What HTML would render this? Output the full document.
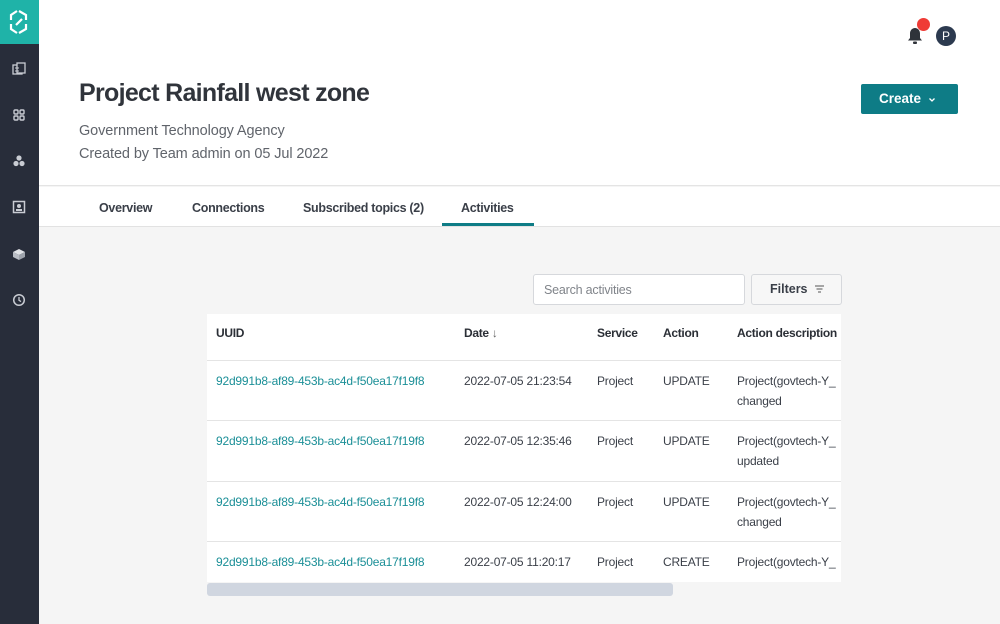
<!DOCTYPE html>
<html><head><meta charset="utf-8"><style>
*{margin:0;padding:0;box-sizing:border-box}
body{width:1000px;height:624px;overflow:hidden;background:#f5f5f5;font-family:"Liberation Sans",sans-serif;color:#2b2f36;position:relative}
.a{position:absolute;white-space:nowrap}
#side{position:absolute;left:0;top:0;width:39px;height:624px;background:#282d3a}
#logo{position:absolute;left:0;top:0;width:39px;height:44px;background:#1fb3a8}
#hdr{position:absolute;left:39px;top:0;width:961px;height:186px;background:#fff;border-bottom:1px solid #e4e4e4}
#tabs{position:absolute;left:39px;top:187px;width:961px;height:40px;background:#fff;border-bottom:1px solid #e2e2e2}
.tab{position:absolute;top:14px;font-size:12.5px;font-weight:bold;color:#3a3f48;letter-spacing:-0.3px}
.t{font-size:12px;letter-spacing:-0.2px;color:#3a3f48;line-height:20px}
.th{font-size:12px;font-weight:bold;letter-spacing:-0.3px;color:#2b2f36}
.l{color:#1b8f97}
.hr{position:absolute;left:207px;width:634px;height:1px;background:#e4e4e4}
</style></head><body>
<div id="side">
<div id="logo"><svg width="39" height="44" viewBox="0 0 39 44"><g fill="none" stroke="#fff" stroke-width="2.2"><path d="M19 11 L26 15 L26 20"/><path d="M26 24 L26 29 L19 33"/><path d="M17 33 L11 29 L11 24"/><path d="M11 20 L11 15 L17 11"/><path d="M16 25 L22 19"/></g></svg></div>
<svg class="a" style="left:12px;top:62px" width="14" height="14" viewBox="0 0 14 14"><rect x="1" y="3" width="9" height="9" fill="none" stroke="#c9ccd3" stroke-width="1.3"/><rect x="5" y="1" width="8" height="10" fill="#282d3a" stroke="#c9ccd3" stroke-width="1.3"/><path d="M3 6h4M3 9h4" stroke="#c9ccd3"/></svg>
<svg class="a" style="left:12px;top:108px" width="14" height="14" viewBox="0 0 14 14"><g fill="none" stroke="#c9ccd3" stroke-width="1.4"><rect x="2" y="2" width="4" height="4" rx="1"/><rect x="8" y="2" width="4" height="4" rx="1"/><rect x="2" y="8" width="4" height="4" rx="1"/><rect x="8" y="8" width="4" height="4" rx="1"/></g></svg>
<svg class="a" style="left:12px;top:154px" width="14" height="14" viewBox="0 0 14 14"><g fill="#c9ccd3"><circle cx="7" cy="4" r="2.6"/><circle cx="4" cy="9.5" r="2.6"/><circle cx="10" cy="9.5" r="2.6"/></g></svg>
<svg class="a" style="left:12px;top:200px" width="14" height="14" viewBox="0 0 14 14"><rect x="1.5" y="1.5" width="11" height="11" fill="none" stroke="#c9ccd3" stroke-width="1.5"/><circle cx="7" cy="6" r="2" fill="#c9ccd3"/><rect x="4" y="9" width="6" height="2" fill="#c9ccd3"/></svg>
<svg class="a" style="left:12px;top:247px" width="14" height="14" viewBox="0 0 14 14"><path d="M7 2 L13 5 L7 8 L1 5Z" fill="#e0e2e6"/><path d="M1 5 L7 8 L7 13 L1 10Z" fill="#b8bcc4"/><path d="M13 5 L7 8 L7 13 L13 10Z" fill="#9da2ab"/></svg>
<svg class="a" style="left:12px;top:293px" width="14" height="14" viewBox="0 0 14 14"><circle cx="7" cy="7" r="5.3" fill="none" stroke="#c9ccd3" stroke-width="1.5"/><path d="M7 4v3.3l2 1.3" fill="none" stroke="#c9ccd3" stroke-width="1.3"/></svg>
</div>
<div id="hdr">
<svg class="a" style="left:866px;top:26px" width="20" height="20" viewBox="0 0 20 20"><path d="M10 2c-3 0-5 2.5-5 5.5v4.5l-2 2.5h14l-2-2.5v-4.5c0-3-2-5.5-5-5.5z" fill="#2f333a"/><rect x="8" y="15.5" width="4" height="2.5" rx="1" fill="#2f333a"/></svg>
<div class="a" style="left:878px;top:18px;width:13px;height:13px;border-radius:50%;background:#ef3b36"></div>
<div class="a" style="left:897px;top:26px;width:20px;height:20px;border-radius:50%;background:#2c3a4f;color:#fff;font-size:12px;text-align:center;line-height:20px">P</div>
<div class="a" style="left:40px;top:79px;font-size:25px;font-weight:bold;color:#30343b;letter-spacing:-0.7px">Project Rainfall west zone</div>
<div class="a" style="left:40px;top:123px;font-size:14.5px;color:#60646b;letter-spacing:-0.1px">Government Technology Agency</div>
<div class="a" style="left:40px;top:146px;font-size:14.5px;color:#60646b;letter-spacing:-0.1px">Created by Team admin on 05 Jul 2022</div>
<div class="a" style="left:822px;top:84px;width:97px;height:30px;background:#0e7c86;border-radius:2px;color:#fff;font-size:13.5px;font-weight:bold;line-height:30px;padding-left:18px">Create <svg width="8" height="6" viewBox="0 0 8 6" style="margin-left:3px"><path d="M1.5 1.5L4 4l2.5-2.5" fill="none" stroke="#fff" stroke-width="1.3"/></svg></div>
</div>
<div id="tabs">
<div class="tab" style="left:60px">Overview</div>
<div class="tab" style="left:153px">Connections</div>
<div class="tab" style="left:264px">Subscribed topics (2)</div>
<div class="tab" style="left:422px">Activities</div>
<div class="a" style="left:403px;top:36px;width:92px;height:3px;background:#0e7c86"></div>
</div>
<div class="a" style="left:533px;top:274px;width:212px;height:31px;background:#fff;border:1px solid #d6d8dc;border-radius:3px;font-size:12.5px;color:#80848a;padding:8px 10px;letter-spacing:-0.2px">Search activities</div>
<div class="a" style="left:751px;top:274px;width:91px;height:31px;background:#f7f7f7;border:1px solid #d6d8dc;border-radius:3px;font-size:12.5px;font-weight:bold;color:#3a3f48;padding:7px 0 0 18px">Filters <svg width="11" height="9" viewBox="0 0 11 9" style="margin-left:3px"><path d="M1 2h9M2.5 5h6M4 8h3" stroke="#555" stroke-width="1.1"/></svg></div>
<div class="a" style="left:207px;top:314px;width:634px;height:268px;background:#fff"></div>
<div class="hr" style="top:360px"></div><div class="hr" style="top:420px"></div><div class="hr" style="top:481px"></div><div class="hr" style="top:541px"></div>
<div class="a th" style="left:216px;top:326px">UUID</div>
<div class="a th" style="left:464px;top:326px">Date <span style="font-weight:normal;color:#666">&#8595;</span></div>
<div class="a th" style="left:597px;top:326px">Service</div>
<div class="a th" style="left:663px;top:326px">Action</div>
<div class="a th" style="left:737px;top:326px;width:104px;overflow:hidden">Action description</div>
<div class="a t l" style="left:216px;top:371px">92d991b8-af89-453b-ac4d-f50ea17f19f8</div>
<div class="a t" style="left:464px;top:371px">2022-07-05 21:23:54</div>
<div class="a t" style="left:597px;top:371px">Project</div>
<div class="a t" style="left:663px;top:371px">UPDATE</div>
<div class="a t" style="left:737px;top:371px;width:104px;overflow:hidden">Project(govtech-Y_<br>changed</div>
<div class="a t l" style="left:216px;top:431px">92d991b8-af89-453b-ac4d-f50ea17f19f8</div>
<div class="a t" style="left:464px;top:431px">2022-07-05 12:35:46</div>
<div class="a t" style="left:597px;top:431px">Project</div>
<div class="a t" style="left:663px;top:431px">UPDATE</div>
<div class="a t" style="left:737px;top:431px;width:104px;overflow:hidden">Project(govtech-Y_<br>updated</div>
<div class="a t l" style="left:216px;top:492px">92d991b8-af89-453b-ac4d-f50ea17f19f8</div>
<div class="a t" style="left:464px;top:492px">2022-07-05 12:24:00</div>
<div class="a t" style="left:597px;top:492px">Project</div>
<div class="a t" style="left:663px;top:492px">UPDATE</div>
<div class="a t" style="left:737px;top:492px;width:104px;overflow:hidden">Project(govtech-Y_<br>changed</div>
<div class="a t l" style="left:216px;top:552px">92d991b8-af89-453b-ac4d-f50ea17f19f8</div>
<div class="a t" style="left:464px;top:552px">2022-07-05 11:20:17</div>
<div class="a t" style="left:597px;top:552px">Project</div>
<div class="a t" style="left:663px;top:552px">CREATE</div>
<div class="a t" style="left:737px;top:552px;width:104px;overflow:hidden">Project(govtech-Y_</div>
<div class="a" style="left:207px;top:583px;width:466px;height:13px;background:#d0d6e0;border-radius:3px"></div>
</body></html>
